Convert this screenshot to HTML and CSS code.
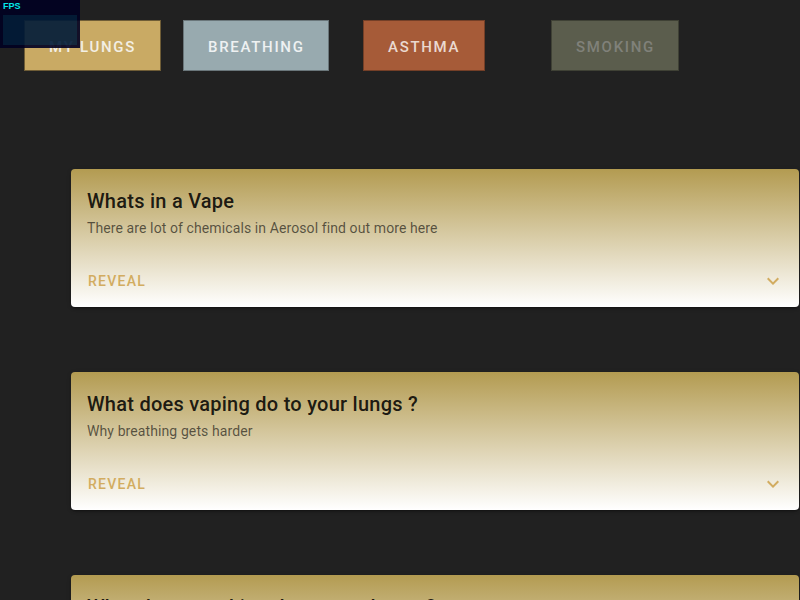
FILE: index.html
```html
<!DOCTYPE html>
<html>
<head>
<meta charset="utf-8">
<link rel="stylesheet" href="styles.css">
</head>
<body>
<nav class="topnav">
  <button class="nav-btn lungs">My Lungs</button>
  <button class="nav-btn breathing">Breathing</button>
  <button class="nav-btn asthma">Asthma</button>
  <button class="nav-btn smoking">Smoking</button>
</nav>

<main class="cards">
  <section class="card">
    <div class="card-title">Whats in a Vape</div>
    <div class="card-subtitle">There are lot of chemicals in Aerosol find out more here</div>
    <div class="card-actions">
      <span class="reveal">Reveal</span>
      <span class="chev"><svg viewBox="0 0 24 24" width="24" height="24"><path d="M7.41,8.58L12,13.17L16.59,8.58L18,10L12,16L6,10L7.41,8.58Z"/></svg></span>
    </div>
  </section>
  <section class="card">
    <div class="card-title">What does vaping do to your lungs ?</div>
    <div class="card-subtitle">Why breathing gets harder</div>
    <div class="card-actions">
      <span class="reveal">Reveal</span>
      <span class="chev"><svg viewBox="0 0 24 24" width="24" height="24"><path d="M7.41,8.58L12,13.17L16.59,8.58L18,10L12,16L6,10L7.41,8.58Z"/></svg></span>
    </div>
  </section>
  <section class="card">
    <div class="card-title">What does smoking do to your lungs ?</div>
    <div class="card-subtitle">Why it is harmful</div>
    <div class="card-actions">
      <span class="reveal">Reveal</span>
      <span class="chev"><svg viewBox="0 0 24 24" width="24" height="24"><path d="M7.41,8.58L12,13.17L16.59,8.58L18,10L12,16L6,10L7.41,8.58Z"/></svg></span>
    </div>
  </section>
</main>

<div class="fps">
  <div class="fps-label">FPS</div>
  <div class="fps-graph"></div>
</div>
</body>
</html>
```

FILE: styles.css
```css
html, body {
  margin: 0;
  padding: 0;
  background: #212121;
  font-family: Roboto, "Liberation Sans", sans-serif;
  overflow: hidden;
}

.topnav {
  display: flex;
  align-items: flex-start;
  padding: 20px 0 0 24px;
}

.nav-btn {
  height: 51px;
  padding: 2px 24px 0 24px;
  border: 1px solid rgba(0, 0, 0, 0.3);
  font-family: Roboto, "Liberation Sans", sans-serif;
  font-weight: 500;
  font-size: 15px;
  letter-spacing: 1.7px;
  text-transform: uppercase;
  box-sizing: border-box;
}

.lungs {
  width: 137px;
  background: #c9aa64;
  color: #f3efe4;
  border-color: #6f5d36;
}
.breathing {
  width: 146px;
  margin-left: 22px;
  background: #98aaaf;
  color: #eef1f2;
}
.asthma {
  width: 122px;
  margin-left: 34px;
  background: #a65b38;
  color: #ead9d0;
}
.smoking {
  width: 128px;
  margin-left: 66px;
  background: #5b5d4d;
  color: #80817a;
}

.cards {
  display: flex;
  flex-direction: column;
  gap: 65px;
  margin: 98px 0 0 71px;
  width: 728px;
}

.card {
  border-radius: 4px;
  background: linear-gradient(to bottom, #b39b51 0%, #ffffff 100%);
  box-shadow: 0 3px 1px -2px rgba(0,0,0,0.2), 0 2px 2px 0 rgba(0,0,0,0.14), 0 1px 5px 0 rgba(0,0,0,0.12);
}

.card-title {
  padding: 16px 16px 0 16px;
  font-size: 20px;
  font-weight: 500;
  line-height: 32px;
  letter-spacing: 0.0125em;
  color: rgba(0, 0, 0, 0.87);
}

.card-subtitle {
  padding: 1px 16px 16px 16px;
  font-size: 14px;
  line-height: 20px;
  letter-spacing: 0.1px;
  color: rgba(0, 0, 0, 0.6);
}

.card-actions {
  display: flex;
  align-items: center;
  justify-content: space-between;
  height: 36px;
  padding: 9px 14px 8px 17px;
}

.reveal {
  font-size: 14px;
  font-weight: 500;
  letter-spacing: 0.09em;
  text-transform: uppercase;
  color: #d2ac60;
}

.chev {
  width: 24px;
  height: 24px;
  display: flex;
}
.chev svg {
  fill: #d2ac60;
}

.fps {
  position: absolute;
  left: 0;
  top: 0;
  width: 80px;
  height: 48px;
  background: #000022;
  opacity: 0.9;
}
.fps-label {
  position: absolute;
  left: 3px;
  top: 1px;
  font-family: "Liberation Sans", Arial, sans-serif;
  font-weight: bold;
  font-size: 9px;
  line-height: 10px;
  color: #00ffff;
}
.fps-graph {
  position: absolute;
  left: 3px;
  top: 15px;
  width: 74px;
  height: 30px;
  background: #001a38;
}
```
